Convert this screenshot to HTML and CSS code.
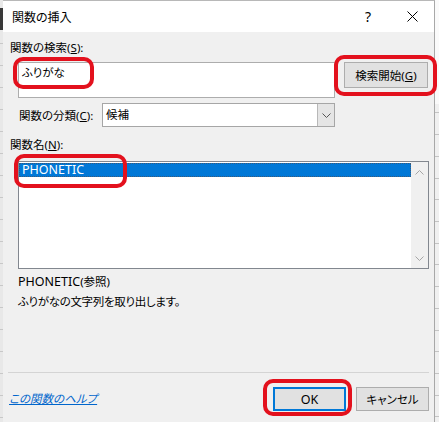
FILE: index.html
```html
<!DOCTYPE html>
<html lang="ja">
<head>
<meta charset="utf-8">
<title>関数の挿入</title>
<link rel="stylesheet" href="styles.css">
</head>
<body>
<div class="screen">
  <div class="xl-left"><div class="xl-dark"></div></div>
  <div class="dialog">
    <div class="titlebar">
      <span class="title">関数の挿入</span>
      <span class="tb-help">?</span>
      <span class="tb-close"><svg width="11" height="11" viewBox="0 0 11 11"><path d="M0.5 0.5 L10.5 10.5 M10.5 0.5 L0.5 10.5" stroke="#000" stroke-width="1" fill="none"/></svg></span>
    </div>
    <div class="body">
      <div class="label">関数の検索(<u>S</u>):</div>
      <div class="search-row">
        <div class="input">ふりがな</div>
        <div class="btn btn-go">検索開始(<u>G</u>)</div>
      </div>
      <div class="cat-row">
        <span class="cat-label">関数の分類(<u>C</u>):</span>
        <div class="select">
          <span class="select-val">候補</span>
          <span class="select-drop"><svg width="9" height="5" viewBox="0 0 9 5"><path d="M0.5 0.5 L4.5 4.5 L8.5 0.5" stroke="#555" stroke-width="1" fill="none"/></svg></span>
        </div>
      </div>
      <div class="label label-name">関数名(<u>N</u>):</div>
      <div class="list">
        <div class="items">
          <div class="item selected"><span class="lat">PHONETIC</span></div>
        </div>
        <div class="scroll">
          <svg width="9" height="5" viewBox="0 0 9 5"><path d="M0.5 4.5 L4.5 0.5 L8.5 4.5" stroke="#a6a6a6" stroke-width="1" fill="none"/></svg>
          <svg width="9" height="5" viewBox="0 0 9 5"><path d="M0.5 0.5 L4.5 4.5 L8.5 0.5" stroke="#a6a6a6" stroke-width="1" fill="none"/></svg>
        </div>
      </div>
      <div class="desc">
        <div><span class="lat">PHONETIC</span>(参照)</div>
        <div class="desc-text">ふりがなの文字列を取り出します。</div>
      </div>
      <div class="sep"></div>
      <div class="footer">
        <a class="help-link" href="#">この関数のヘルプ</a>
        <div class="btns">
          <div class="btn btn-ok"><span class="lat">OK</span></div>
          <div class="btn btn-cancel">キャンセル</div>
        </div>
      </div>
    </div>
  </div>
  <div class="xl-right"></div>
  <div class="mark mark-input"></div>
  <div class="mark mark-go"></div>
  <div class="mark mark-item"></div>
  <div class="mark mark-ok"></div>
</div>
</body>
</html>
```
FILE: styles.css
```css
html, body {
  margin: 0;
  padding: 0;
}
body {
  width: 439px;
  height: 422px;
  overflow: hidden;
  font-family: "Noto Sans", "Noto Sans CJK JP", sans-serif;
  font-size: 11.5px;
  font-feature-settings: "palt";
  color: #000;
  background: #f0f0f0;
}
.lat {
  font-size: 12.5px;
}
.screen {
  position: relative;
  display: flex;
  width: 439px;
  height: 422px;
  background: #f0f0f0;
}
.xl-left {
  width: 3px;
  background: repeating-linear-gradient(to bottom, #e8e8e8 0 21px, #c8c8c8 21px 22px);
  padding-top: 8px;
  box-sizing: border-box;
}
.xl-dark {
  height: 22px;
  background: #3a3a3a;
}
.xl-right {
  width: 4px;
  background:
    linear-gradient(to bottom, #fafafa 0 104px, transparent 104px),
    repeating-linear-gradient(to bottom, #f0f0f0 0 20.7px, #c4c4c4 20.7px 21.7px);
  background-position: 0 0, 0 5px;
}
.dialog {
  width: 432px;
  box-sizing: border-box;
  display: flex;
  flex-direction: column;
  border-top: 1px solid #b8b8b8;
  border-right: 1px solid #a8a8a8;
  background: #f0f0f0;
}
.titlebar {
  height: 31px;
  background: #fff;
  display: flex;
  align-items: center;
  padding-left: 9px;
}
.title {
  flex: 1;
  font-size: 12px;
}
.tb-help {
  width: 44px;
  text-align: center;
  font-size: 14px;
}
.tb-close {
  width: 44px;
  display: flex;
  justify-content: center;
  align-items: center;
}
.body {
  flex: 1;
  padding: 8px 4px 0 7px;
  display: flex;
  flex-direction: column;
}
.label {
  line-height: 16px;
  height: 16px;
}
.search-row {
  display: flex;
  align-items: flex-start;
  margin-top: 6px;
  margin-left: 8px;
  gap: 9px;
}
.input {
  width: 317px;
  height: 36px;
  box-sizing: border-box;
  border: 1px solid #adadad;
  background: #fff;
  padding: 2px 3px;
  line-height: 16px;
}
.btn {
  box-sizing: border-box;
  background: #e1e1e1;
  border: 1px solid #adadad;
  display: flex;
  align-items: center;
  justify-content: center;
}
.btn-go {
  width: 84px;
  height: 26px;
}
.cat-row {
  display: flex;
  align-items: center;
  margin-top: 5px;
  margin-left: 9px;
  height: 24px;
}
.cat-label {
  width: 83px;
}
.select {
  width: 233px;
  height: 24px;
  box-sizing: border-box;
  border: 1px solid #a6a6a6;
  background: #fff;
  display: flex;
}
.select-val {
  flex: 1;
  padding-left: 3px;
  line-height: 22px;
}
.select-drop {
  width: 16px;
  background: #e5e5e5;
  border-left: 1px solid #b8b8b8;
  display: flex;
  align-items: center;
  justify-content: center;
}
.label-name {
  margin-top: 10px;
}
.list {
  margin-top: 8px;
  margin-left: 8px;
  width: 411px;
  height: 108px;
  box-sizing: border-box;
  border: 1px solid #82878f;
  background: #fff;
  display: flex;
}
.items {
  flex: 1;
  padding-top: 1px;
}
.item {
  height: 14px;
  line-height: 12px;
  box-sizing: border-box;
  padding-left: 2px;
}
.item.selected {
  background: #0078d7;
  color: #fff;
  border: 1px dotted #3b5a7a;
}
.scroll {
  width: 17px;
  background: #f0f0f0;
  display: flex;
  flex-direction: column;
  align-items: center;
  justify-content: space-between;
  padding: 8px 0 7px;
  box-sizing: border-box;
}
.desc {
  margin-top: 3px;
  margin-left: 8px;
  line-height: 20px;
}
.desc-text {
  letter-spacing: -0.3px;
}
.sep {
  margin-top: 60px;
  margin-left: -2px;
  width: 421px;
  height: 1px;
  background: #d4d4d4;
}
.footer {
  margin-top: 14px;
  margin-left: -1px;
  height: 24px;
  display: flex;
  align-items: center;
  justify-content: space-between;
}
.help-link {
  color: #0066cc;
  text-decoration: underline;
  font-style: italic;
  margin-top: -3px;
}
.btns {
  display: flex;
  gap: 10px;
  margin-right: 1px;
}
.btn-ok, .btn-cancel {
  width: 73px;
  height: 24px;
}
.btn-ok {
  border: 2px solid #0078d7;
}
.mark {
  position: absolute;
  box-sizing: border-box;
  border: 4px solid #e3111d;
  border-radius: 10px;
}
.mark-input { left: 13px; top: 57px; width: 81px; height: 32px; }
.mark-go { left: 334px; top: 55px; width: 103px; height: 41px; }
.mark-item { left: 14px; top: 154px; width: 113px; height: 34px; }
.mark-ok { left: 263px; top: 379px; width: 89px; height: 37px; }
```
